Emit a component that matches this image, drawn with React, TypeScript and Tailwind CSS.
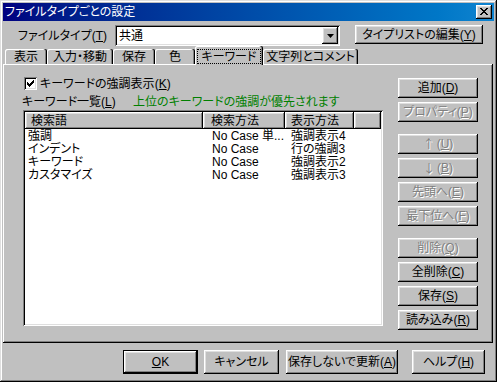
import React from 'react';

const raised =
  'shadow-[inset_-1px_-1px_#000,inset_1px_1px_#fff,inset_-2px_-2px_#808080,inset_2px_2px_#dfdfdf]';
const sunken =
  'shadow-[inset_1px_1px_#808080,inset_-1px_-1px_#fff,inset_2px_2px_#000,inset_-2px_-2px_#dfdfdf]';

function Mn({ k }: { k: string }) {
  return (
    <span>
      (<u>{k}</u>)
    </span>
  );
}

function Btn({
  label,
  k,
  disabled,
  className = '',
}: {
  label: React.ReactNode;
  k?: string;
  disabled?: boolean;
  className?: string;
}) {
  return (
    <div
      className={`flex items-center justify-center bg-[#c0c0c0] ${raised} ${
        disabled ? 'text-[#808080] [text-shadow:1px_1px_0_#fff]' : 'text-black'
      } ${className}`}
    >
      {label}
      {k && <Mn k={k} />}
    </div>
  );
}

function Tab({ label, w, selected }: { label: string; w: string; selected?: boolean }) {
  if (selected) {
    return (
      <div
        className={`${w} h-[19px] bg-[#c0c0c0] rounded-t-[2px] flex justify-center pt-[3px] pb-[1px] px-[2px] shadow-[inset_-1px_0_#000,inset_-2px_0_#808080,inset_1px_1px_#fff]`}
      >
        <span className="w-full h-[15px] border border-dotted border-black flex items-center justify-center leading-none">
          {label}
        </span>
      </div>
    );
  }
  return (
    <div
      className={`${w} h-[15px] mb-[1px] rounded-t-[2px] flex items-center justify-center leading-none pt-[1px] shadow-[inset_-1px_0_#000,inset_-2px_0_#808080,inset_1px_1px_#fff]`}
    >
      {label}
    </div>
  );
}

const rows = [
  { word: '強調', method: 'No Case 単...', disp: '強調表示4' },
  { word: 'インデント', method: 'No Case', disp: '行の強調3' },
  { word: 'キーワード', method: 'No Case', disp: '強調表示2' },
  { word: 'カスタマイズ', method: 'No Case', disp: '強調表示3' },
];

export default function App() {
  return (
    <div
      className={`w-[497px] h-[382px] bg-[#c0c0c0] p-[3px] flex flex-col text-[12px] text-black [font-family:'Liberation_Sans','Noto_Sans_CJK_JP',sans-serif] [font-feature-settings:'palt'] shadow-[inset_-1px_-1px_#000,inset_1px_1px_#dfdfdf,inset_-2px_-2px_#808080,inset_2px_2px_#fff]`}
    >
      {/* Title bar */}
      <div className="h-[18px] flex items-center justify-between pl-[2px] pr-[2px] bg-gradient-to-r from-[#000080] to-[#1084d0]">
        <span className="text-white leading-none">ファイルタイプごとの設定</span>
        <div className={`w-[16px] h-[14px] bg-[#c0c0c0] flex items-center justify-center ${raised}`}>
          <svg width="8" height="7" viewBox="0 0 8 7" className="mb-[1px]">
            <path d="M0 0h2v1h1v1h2V1h1V0h2v1H7v1H6v1H5v1h1v1h1v1h1v1H6V6H5V5H3v1H2v1H0V6h1V5h1V4h1V3H2V2H1V1H0z" fill="#000" />
          </svg>
        </div>
      </div>

      {/* File type row */}
      <div className="h-[21px] mt-[4px] flex items-start">
        <span className="ml-[15px] w-[97px] h-[21px] flex items-center">
          ファイルタイプ<Mn k="T" />
        </span>
        <div className={`w-[225px] h-[21px] bg-white p-[2px] flex items-center ${sunken}`}>
          <span className="flex-1 pl-[2px]">共通</span>
          <div className={`w-[16px] h-[17px] bg-[#c0c0c0] flex items-center justify-center ${raised}`}>
            <svg width="7" height="4" viewBox="0 0 7 4">
              <path d="M0 0h7L3.5 4z" fill="#000" />
            </svg>
          </div>
        </div>
        <Btn label="タイプリストの編集" k="Y" className="ml-[15px] w-[128px] h-[19px]" />
      </div>

      {/* Tabs */}
      <div className="relative z-10 h-[19px] -mb-[1px] flex items-end pl-[2px]">
        <Tab label="表示" w="w-[42px]" />
        <Tab label="入力・移動" w="w-[66px]" />
        <Tab label="保存" w="w-[42px]" />
        <Tab label="色" w="w-[40px]" />
        <Tab label="キーワード" w="w-[68px]" selected />
        <Tab label="文字列とコメント" w="w-[95px]" />
      </div>

      {/* Tab panel */}
      <div className="w-[490px] h-[279px] flex shadow-[inset_-1px_-1px_#000,inset_1px_1px_#fff,inset_-2px_-2px_#808080]">
        <div className="ml-[20px] w-[360px] flex flex-col">
          <div className="mt-[13px] h-[13px] flex items-center ml-[1px]">
            <div className={`w-[13px] h-[13px] bg-white flex items-center justify-center ${sunken}`}>
              <svg width="7" height="7" viewBox="0 0 7 7">
                <path d="M0 2h1v1h1v1h1V3h1V2h1V1h1V0h1v3H6v1H5v1H4v1H3v1H2V6H1V5H0z" fill="#000" />
              </svg>
            </div>
            <span className="ml-[3px] leading-none">
              キーワードの強調表示<Mn k="K" />
            </span>
          </div>
          <div className="mt-[5px] h-[14px] flex items-center -ml-[1px]">
            <span className="w-[111px]">
              キーワード一覧<Mn k="L" />
            </span>
            <span className="text-[#008000]">上位のキーワードの強調が優先されます</span>
          </div>
          <div className={`mt-[1px] h-[216px] bg-white p-[2px] flex flex-col ${sunken}`}>
            <div className="h-[17px] flex bg-[#c0c0c0]">
              <div className={`w-[178px] h-full flex items-center pl-[6px] ${raised}`}>検索語</div>
              <div className={`w-[82px] h-full flex items-center pl-[8px] ${raised}`}>検索方法</div>
              <div className={`w-[69px] h-full flex items-center pl-[6px] ${raised}`}>表示方法</div>
              <div className={`flex-1 h-full ${raised}`}></div>
            </div>
            {rows.map((r) => (
              <div key={r.word} className="h-[13px] flex items-center leading-none">
                <span className="w-[178px] pl-[3px]">{r.word}</span>
                <span className="w-[82px] pl-[9px]">{r.method}</span>
                <span className="w-[69px] pl-[6px]">{r.disp}</span>
              </div>
            ))}
          </div>
        </div>

        {/* Right buttons */}
        <div className="ml-[15px] w-[80px] pt-[14px] flex flex-col gap-[4px]">
          <Btn label="追加" k="D" className="h-[20px]" />
          <Btn label="プロパティ" k="P" disabled className="h-[20px]" />
          <Btn
            label={<span className="[font-family:'Noto_Sans_CJK_JP',sans-serif] mr-[2px]">↑</span>}
            k="U"
            disabled
            className="h-[20px] mt-[8px]"
          />
          <Btn
            label={<span className="[font-family:'Noto_Sans_CJK_JP',sans-serif] mr-[2px]">↓</span>}
            k="B"
            disabled
            className="h-[20px]"
          />
          <Btn label="先頭へ" k="E" disabled className="h-[20px]" />
          <Btn label="最下位へ" k="F" disabled className="h-[20px]" />
          <Btn label="削除" k="Q" disabled className="h-[20px] mt-[8px]" />
          <Btn label="全削除" k="C" className="h-[20px]" />
          <Btn label="保存" k="S" className="h-[20px]" />
          <Btn label="読み込み" k="R" className="h-[20px]" />
        </div>
      </div>

      {/* Bottom buttons */}
      <div className="flex pl-[120px] pt-[7px]">
        <div className="w-[75px] h-[24px] border border-black">
          <Btn
            label={
              <span>
                <u>O</u>K
              </span>
            }
            className="w-full h-full"
          />
        </div>
        <Btn label="キャンセル" className="ml-[6px] w-[75px] h-[24px]" />
        <Btn label="保存しないで更新" k="A" className="ml-[7px] w-[112px] h-[24px]" />
        <Btn label="ヘルプ" k="H" className="ml-[14px] w-[73px] h-[24px]" />
      </div>
    </div>
  );
}
